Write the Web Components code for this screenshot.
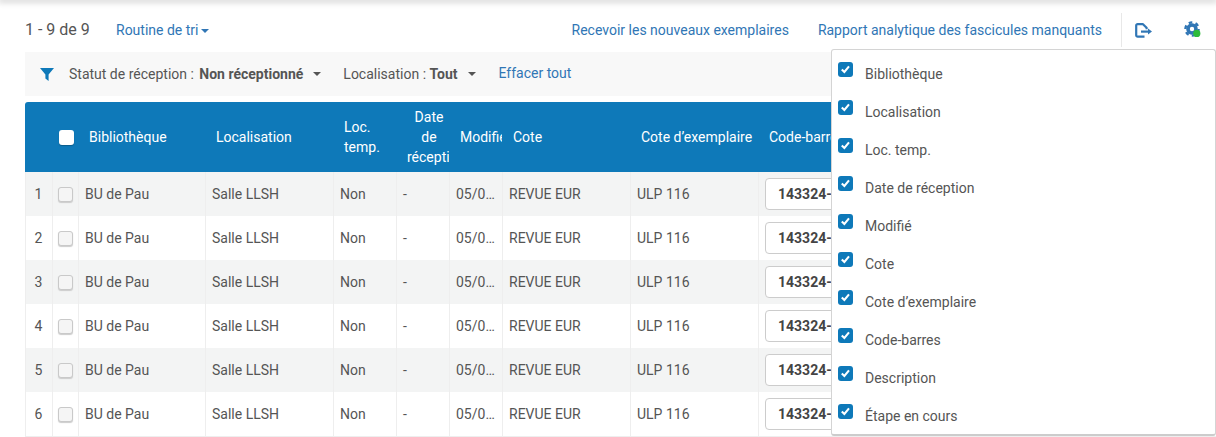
<!DOCTYPE html>
<html lang="fr">
<head>
<meta charset="utf-8">
<title>Réception</title>
<style>
  html, body { margin: 0; height: 437px; overflow: hidden; background: #fff; }
  body { font: 14px/20px Roboto, "Liberation Sans", sans-serif; color: #555; }
</style>
</head>
<body>
<receive-page></receive-page>

<script>
const LINK = "#3076b5";
const BLUE = "#0e79b9";

class TopToolbar extends HTMLElement {
  constructor() {
    super();
    this.attachShadow({ mode: "open" });
  }

  static get styles() {
    return /* css */`
      :host {
        display: flex;
        align-items: center;
        height: 34px;
        padding: 13px 0 5px 25px;
        white-space: nowrap;
      }
      .count { font-size: 16px; width: 91px; }
      a { color: ${LINK}; text-decoration: none; }
      .sort { display: flex; align-items: center; }
      .caret {
        width: 0; height: 0; margin: 2px 0 0 3px;
        border: 4px solid transparent; border-top-color: ${LINK}; border-bottom: 0;
      }
      .right { display: flex; align-items: center; margin-left: auto; height: 100%; }
      .right a + a { margin-left: 29px; }
      .icons {
        display: flex; align-items: center; height: 34px;
        margin-left: 19px; border-left: 1px solid #e8e8e8;
      }
      .exit { margin-left: 13px; display: block; }
      .gear { margin: 0 14px 0 32px; display: block; }
    `;
  }

  connectedCallback() {
    this.shadowRoot.innerHTML = /* html */`
    <style>${TopToolbar.styles}</style>
    <span class="count">1 - 9 de 9</span>
    <a class="sort" href="#">Routine de tri<span class="caret"></span></a>
    <div class="right">
      <a href="#">Recevoir les nouveaux exemplaires</a>
      <a href="#">Rapport analytique des fascicules manquants</a>
      <div class="icons">
        <svg class="exit" width="17" height="15" viewBox="0 0 17 15" fill="none">
          <path d="M9.5 13.6H2.6a1.4 1.4 0 0 1-1.4-1.4V2.6a1.4 1.4 0 0 1 1.4-1.4H8l3.6 3.6v1.4" stroke="${LINK}" stroke-width="2.2" stroke-linejoin="round"/>
          <path d="M6 8.6h8" stroke="${LINK}" stroke-width="2.2"/>
          <path d="M13 5.6l4 3-4 3z" fill="${LINK}"/>
        </svg>
        <svg class="gear" width="18" height="18" viewBox="0 0 18 18" fill="none">
          <circle cx="8" cy="8" r="4" stroke="${LINK}" stroke-width="3.6"/>
          <circle cx="8" cy="8" r="6.6" stroke="${LINK}" stroke-width="2.4" stroke-dasharray="3.6 3.3"/>
          <circle cx="12.8" cy="12.4" r="3.6" fill="#2dbb3a"/>
        </svg>
      </div>
    </div>`;
  }
}

class FilterBar extends HTMLElement {
  constructor() {
    super();
    this.attachShadow({ mode: "open" });
  }

  static get styles() {
    return /* css */`
      :host {
        display: flex;
        align-items: center;
        height: 44px;
        margin-left: 25px;
        padding-left: 15px;
        background: #f8f8f8;
        white-space: nowrap;
      }
      svg { display: block; margin-right: 15px; }
      b { font-weight: 700; margin-left: 2px; }
      .caret {
        display: inline-block; width: 0; height: 0; margin: 0 0 2px 10px; vertical-align: middle;
        border: 4.5px solid transparent; border-top-color: #555; border-bottom: 0;
      }
      .filter + .filter { margin-left: 22px; }
      .filter + .filter b { margin-left: 0; }
      .filter + .filter .caret { margin-left: 11px; }
      a { color: ${LINK}; text-decoration: none; margin: -2px 0 0 22px; }
    `;
  }

  connectedCallback() {
    this.shadowRoot.innerHTML = /* html */`
    <style>${FilterBar.styles}</style>
    <svg width="14" height="13" viewBox="0 0 14 13"><path d="M0 0h14L8.6 6.4V13L5.4 10.6V6.4z" fill="${BLUE}"/></svg>
    <span class="filter">Statut de réception : <b>Non réceptionné</b><span class="caret"></span></span>
    <span class="filter">Localisation : <b>Tout</b><span class="caret"></span></span>
    <a href="#">Effacer tout</a>`;
  }
}

class TableHead extends HTMLElement {
  constructor() {
    super();
    this.attachShadow({ mode: "open" });
  }

  static get styles() {
    return /* css */`
      :host {
        display: grid;
        grid-template-columns: var(--cols);
        height: 70px;
        background: ${BLUE};
        color: #fff;
        border-top-left-radius: 3px;
      }
      div { display: flex; align-items: center; padding-left: 11px; overflow: hidden; white-space: nowrap; }
      .date span { display: block; flex: none; width: 44px; text-align: center; }
      .check { padding-left: 7px; }
      .box { display: block; flex: none; width: 15px; height: 15px; border-radius: 3px; background: #fff; box-shadow: 0 1px 1px rgba(0, 0, 0, .25); }
    `;
  }

  connectedCallback() {
    this.shadowRoot.innerHTML = /* html */`
    <style>${TableHead.styles}</style>
    <div></div>
    <div class="check"><span class="box"></span></div>
    <div>Bibliothèque</div>
    <div>Localisation</div>
    <div><span>Loc.<br>temp.</span></div>
    <div class="date"><span>Date<br>de<br>réception</span></div>
    <div>Modifié</div>
    <div>Cote</div>
    <div>Cote d’exemplaire</div>
    <div>Code-barres</div>`;
  }
}

class TableRow extends HTMLElement {
  constructor() {
    super();
    this.attachShadow({ mode: "open" });
  }

  static get styles() {
    return /* css */`
      :host {
        display: grid;
        grid-template-columns: var(--cols);
        height: 44px;
        box-shadow: 0 1px 0 #eee;
      }
      :host([odd]) { background: #f3f4f4; box-shadow: none; }
      div {
        display: flex; align-items: center; padding-left: 6px;
        border-left: 1px solid #eee; overflow: hidden; white-space: nowrap;
      }
      .num { justify-content: center; padding: 0 1px 0 0; }
      .check { padding-left: 5px; }
      .box {
        box-sizing: border-box; width: 15px; height: 15px; margin-top: 1px;
        border: 1px solid #c9c9c9; border-radius: 3px;
        background: #f5f5f5; box-shadow: 0 1px 1px #ccc;
      }
      .ell { display: block; width: 40px; overflow: hidden; text-overflow: ellipsis; }
      .barcode { overflow: visible; }
      .input {
        box-sizing: border-box; width: 240px; height: 32px; padding-left: 12px; line-height: 30px;
        border: 1px solid #ccc; border-radius: 4px; background: #fff;
        font-weight: 700; color: #444;
      }
    `;
  }

  connectedCallback() {
    this.shadowRoot.innerHTML = /* html */`
    <style>${TableRow.styles}</style>
    <div class="num">${this.getAttribute("num")}</div>
    <div class="check"><span class="box"></span></div>
    <div>BU de Pau</div>
    <div>Salle LLSH</div>
    <div>Non</div>
    <div>-</div>
    <div><span class="ell">05/0…</span></div>
    <div>REVUE EUR</div>
    <div>ULP 116</div>
    <div class="barcode"><span class="input">143324-</span></div>`;
  }
}

class DataTable extends HTMLElement {
  constructor() {
    super();
    this.attachShadow({ mode: "open" });
  }

  connectedCallback() {
    this.shadowRoot.innerHTML = /* html */`
    <style>
      :host {
        display: block;
        margin: 6px 0 0 25px;
        --cols: 27px 26px 127px 128px 63px 53px 53px 128px 128px 500px;
      }
    </style>
    <table-head></table-head>
    <slot></slot>`;
  }
}

class ColumnItem extends HTMLElement {
  constructor() {
    super();
    this.attachShadow({ mode: "open" });
  }

  connectedCallback() {
    this.shadowRoot.innerHTML = /* html */`
    <style>
      :host { display: flex; align-items: flex-start; height: 38px; }
      svg { display: block; flex: none; margin: 0 12px 0 0; }
      span { margin-top: 2px; }
    </style>
    <svg width="15" height="15" viewBox="0 0 15 15">
      <rect width="15" height="15" rx="3" fill="${BLUE}"/>
      <path d="M3.8 7.4l2.6 2.6 4.6-5.6" fill="none" stroke="#fff" stroke-width="2.1"/>
    </svg>
    <span><slot></slot></span>`;
  }
}

class ColumnsMenu extends HTMLElement {
  constructor() {
    super();
    this.attachShadow({ mode: "open" });
  }

  connectedCallback() {
    this.shadowRoot.innerHTML = /* html */`
    <style>
      :host {
        position: absolute;
        left: 831px;
        top: 49px;
        box-sizing: border-box;
        width: 385px;
        height: 387px;
        padding: 12px 0 0 6px;
        background: #fff;
        border: 1px solid #d4d4d4;
        border-bottom: 2px solid #ccc;
        border-radius: 3px;
      }
    </style>
    <slot></slot>`;
  }
}

class ReceivePage extends HTMLElement {
  constructor() {
    super();
    this.attachShadow({ mode: "open" });
  }

  connectedCallback() {
    const rows = [1, 2, 3, 4, 5, 6]
      .map(n => `<table-row num="${n}" ${n % 2 ? "odd" : ""}></table-row>`)
      .join("");
    const items = ["Bibliothèque", "Localisation", "Loc. temp.", "Date de réception", "Modifié",
      "Cote", "Cote d’exemplaire", "Code-barres", "Description", "Étape en cours"]
      .map(t => `<column-item>${t}</column-item>`)
      .join("");
    this.shadowRoot.innerHTML = /* html */`
    <style>
      :host { display: block; position: relative; width: 1216px; height: 437px; overflow: hidden; }
      .shadow { height: 0; box-shadow: 0 0 6px 2px rgba(0, 0, 0, .22); }
    </style>
    <div class="shadow"></div>
    <top-toolbar></top-toolbar>
    <filter-bar></filter-bar>
    <data-table>${rows}</data-table>
    <columns-menu>${items}</columns-menu>`;
  }
}

customElements.define("top-toolbar", TopToolbar);
customElements.define("filter-bar", FilterBar);
customElements.define("table-head", TableHead);
customElements.define("table-row", TableRow);
customElements.define("data-table", DataTable);
customElements.define("column-item", ColumnItem);
customElements.define("columns-menu", ColumnsMenu);
customElements.define("receive-page", ReceivePage);
</script>
</body>
</html>
